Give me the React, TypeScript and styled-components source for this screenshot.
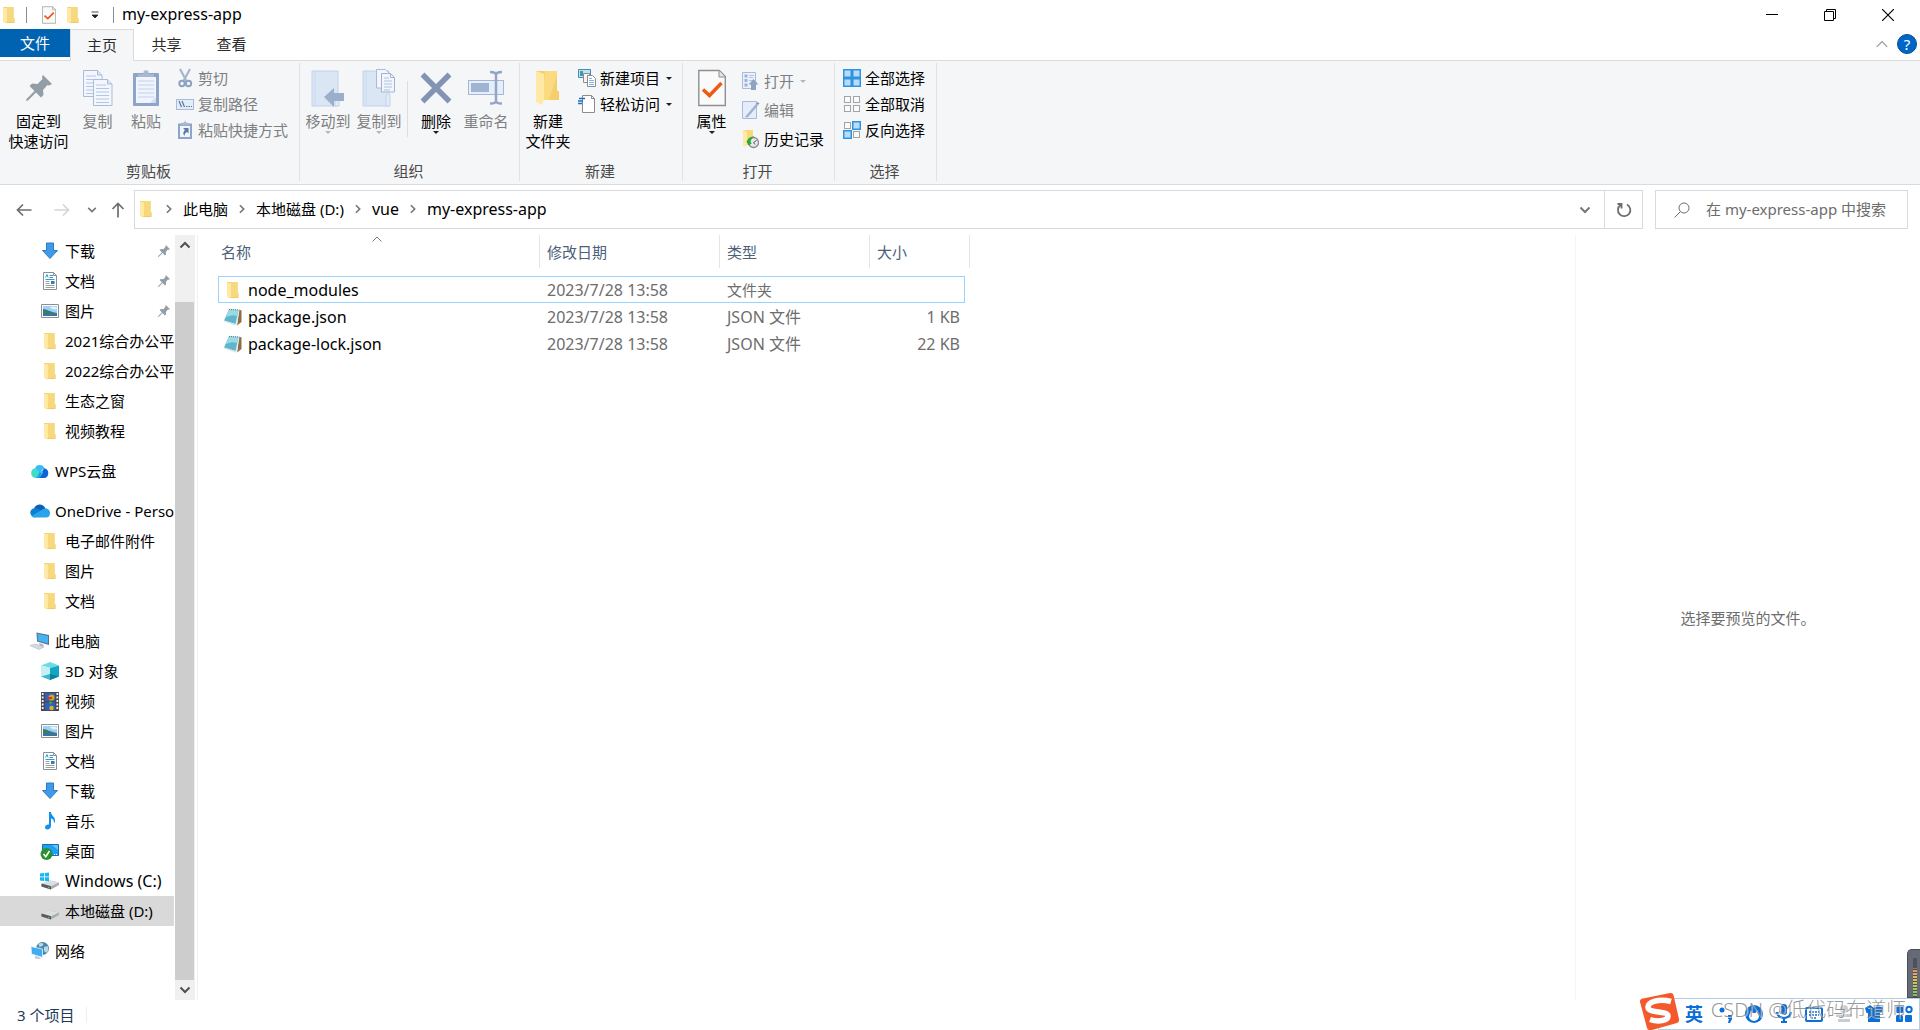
import React, { useState } from "react";
import styled, { createGlobalStyle, css } from "styled-components";

const GlobalStyle = createGlobalStyle`
  *, *::before, *::after { box-sizing: border-box; }
  body {
    margin: 0;
    background: #fff;
    color: #000;
    font: 15px/20px "Noto Sans", "Noto Sans CJK SC", sans-serif;
  }
  button, input { font: inherit; color: inherit; }
  button { border: 0; padding: 0; background: none; cursor: default; }
  a { color: inherit; text-decoration: none; }
  svg { display: block; flex: none; }
`;

/* ---------- icons ---------- */

const FolderIcon = ({ size = 18 }: { size?: number }) => (
  <svg width={size} height={size} viewBox="0 0 18 18">
    <path d="M3 1h10.500v11.500h1V17H5z" fill="#f0cb6b" />
    <path d="M6 1h7.500v11l1 .5v3.500H6z" fill="#f7d87c" />
    <path d="M3 1.200l4 1.300v12.500l-1 2.500-3-1.500z" fill="#ffeaa5" />
  </svg>
);

const NewFolderIcon = () => (
  <svg width="26" height="36" viewBox="0 0 26 36">
    <path d="M1 1h21v20l2 2v7H8z" fill="#f5cf6a" />
    <path d="M10 1h12v19l2 2v8H8z" fill="#fbdb80" />
    <path d="M14 30L22 5v15l2 2v8z" fill="#f2ca62" opacity=".7" />
    <path d="M1 1l8 3v26l-2 5-6-3z" fill="#ffe9a6" />
  </svg>
);

const PinIcon = ({ size = 14 }: { size?: number }) => (
  <svg width={size} height={size} viewBox="0 0 26 26">
    <path
      d="M17 0l9 9-3 1.500-1.500-.5-4.500 5 .5 5-2.500 2.500-5-5L2 25.500l-2 .5.5-2L8.500 16 3.500 11 6 8.500l5.500.5L16.500 4 16 2z"
      fill="#929da5"
    />
  </svg>
);

const Sheet = ({ x, y }: { x: number; y: number }) => (
  <g transform={`translate(${x} ${y})`}>
    <path d="M.5.500h14l4.500 4.500v21.500H.5z" fill="#f3f7fd" stroke="#a9bbd8" />
    <path d="M14.500.5V5H19" fill="#dce6f5" stroke="#a9bbd8" />
    <path d="M3 6h10M3 9.500h13M3 13h13M3 16.500h13M3 20h13M3 23.500h13" stroke="#b4c6e4" />
  </g>
);

const CopyIcon = () => (
  <svg width="32" height="38" viewBox="0 0 32 38">
    <Sheet x={1} y={1} />
    <Sheet x={11} y={10} />
  </svg>
);

const PasteIcon = () => (
  <svg width="28" height="38" viewBox="0 0 28 38">
    <rect x="1" y="4" width="26" height="33" rx="1" fill="#8fa4c9" />
    <rect x="4" y="8" width="20" height="26" fill="#f0f5fd" />
    <path d="M6 12h16M6 16h16M6 20h16M6 24h16M6 28h16" stroke="#c2d1ea" />
    <path d="M6 8V5h5l1-3.500h4L17 5h5v3z" fill="#a8b7d2" />
    <path d="M18 34l6-6v6z" fill="#d4dfef" />
  </svg>
);

const CutIcon = () => (
  <svg width="18" height="20" viewBox="0 0 18 20" fill="none">
    <path d="M4 1l6.500 12M14 1L7.500 13" stroke="#a9b5cb" strokeWidth="2.200" />
    <circle cx="6" cy="15.500" r="2.700" stroke="#8fa1c2" strokeWidth="2" />
    <circle cx="12.500" cy="15.500" r="2.700" stroke="#8fa1c2" strokeWidth="2" />
  </svg>
);

const PathIcon = () => (
  <svg width="18" height="18" viewBox="0 0 18 18">
    <rect x=".5" y="4.500" width="17" height="10" fill="#e3ecf9" stroke="#a9bbd8" />
    <path d="M3 6l2.500 6M6 6l2.500 6" stroke="#5f7294" strokeWidth="1.200" />
    <path d="M10 11.500h1.500M12.500 11.500H14M15 11.500h1" stroke="#5f7294" />
  </svg>
);

const ShortcutIcon = () => (
  <svg width="18" height="20" viewBox="0 0 18 20">
    <path d="M2 3.500h14V19H2z" fill="#8fa4c9" />
    <path d="M4 6h10v11H4z" fill="#eff5fd" />
    <path d="M5 5.500V3l3-.5 1-2 1 2 3 .5v2.500z" fill="#a8b7d2" />
    <path d="M7 8h5.500v5.500L11 12c-2 1-2.500 2-2.500 4-2-2.500-1-4.500.5-6z" fill="#5f789f" />
  </svg>
);

const DisabledBook = () => (
  <>
    <path d="M1 2h26v35H1z" fill="#dbe6f5" stroke="#c3d2e9" />
    <path d="M4 2v34" stroke="#c9d7ec" />
    <path d="M24 37V27q3-4 4-1v11z" fill="#e3ebf7" stroke="#c3d2e9" />
  </>
);

const MoveToIcon = () => (
  <svg width="34" height="38" viewBox="0 0 34 38">
    <DisabledBook />
    <path d="M13 28l10-9v5h10v8H23v6z" fill="#9baecb" />
  </svg>
);

const CopyToIcon = () => (
  <svg width="34" height="38" viewBox="0 0 34 38">
    <DisabledBook />
    <g transform="translate(14 0)">
      <path d="M.5.500h9l4 4V19H.5z" fill="#f3f7fd" stroke="#a9bbd8" />
      <path d="M5.500 4.500h9l4 4V23h-13z" fill="#f3f7fd" stroke="#9fb3d4" />
      <path d="M14.500 4.500v4h4" fill="none" stroke="#9fb3d4" />
      <path d="M8 9h5M8 12h8M8 15h8M8 18h8M8 21h6" stroke="#aec0de" />
    </g>
  </svg>
);

const DeleteIcon = () => (
  <svg width="34" height="38" viewBox="0 0 34 38">
    <path d="M3.500 5.500l27 27M30.500 5.500l-27 27" stroke="#8393b4" strokeWidth="5.500" />
  </svg>
);

const RenameIcon = () => (
  <svg width="38" height="38" viewBox="0 0 38 38">
    <rect x="1.500" y="11.500" width="35" height="14" fill="#e6eefa" stroke="#a3b7d9" />
    <rect x="4" y="14" width="18" height="9" fill="#a0b3d2" />
    <path d="M23 3c4 0 6 .5 6 3v26c0 2-2 2.500-6 2.500M35 3c-4 0-6 .5-6 3v26c0 2 2 2.500 6 2.500" fill="none" stroke="#93a5c4" strokeWidth="2.500" />
  </svg>
);

const NewItemIcon = () => (
  <svg width="18" height="18" viewBox="0 0 18 18">
    <path d="M.5.500h12v8H.5z" fill="#bfe3f7" stroke="#3f8fae" />
    <path d="M2 2h3v5H2z" fill="#4a95a5" />
    <path d="M5.500 4.500h6v9h-6z" fill="#f5f5f5" stroke="#8d8d8d" />
    <path d="M9.500 6.500h5l3 3v8h-8z" fill="#fff" stroke="#8d8d8d" />
    <path d="M11 9.500h3M11 11.500h5M11 13.500h5M11 15.500h5" stroke="#7cb5e8" />
  </svg>
);

const EasyAccessIcon = () => (
  <svg width="18" height="18" viewBox="0 0 18 18">
    <path d="M4.500.500h9l3 3v14h-12z" fill="#fff" stroke="#8d8d8d" />
    <path d="M13.500.5v3h3" fill="none" stroke="#8d8d8d" />
    <path d="M1 3.500h6M0 6h5M0 8.500h4" stroke="#1d6fc0" strokeWidth="1.300" />
  </svg>
);

const PropertiesIcon = ({ width = 28, height = 38 }: { width?: number; height?: number }) => (
  <svg width={width} height={height} viewBox="0 0 28 38" preserveAspectRatio="none">
    <path d="M.8 1.500h20.500l6 6V36.500H.8z" fill="#fafafa" stroke="#8f8f8f" strokeWidth="1.400" />
    <path d="M21 1.500v6.500h6" fill="#e4e4e4" stroke="#8f8f8f" />
    <path d="M5 20.500l6.500 6L23.500 14" fill="none" stroke="#ee5a16" strokeWidth="3.400" />
  </svg>
);

const OpenIcon = () => (
  <svg width="18" height="20" viewBox="0 0 18 20">
    <path d="M.5 1.500h13v16H.5z" fill="#eaf1fb" stroke="#a9bbd8" />
    <path d="M2.500 3.500h3v3h-3zM2.500 8h3v3h-3zM2.500 12.500h3v3h-3z" fill="#9db1d2" />
    <path d="M7 4.500h5M7 6.500h4M7 9.500h4" stroke="#b5c6e2" />
    <path d="M11.500 8l5 5.500H14V19H9v-5.500H6.500z" fill="#8fa2c2" />
  </svg>
);

const EditIcon = () => (
  <svg width="18" height="20" viewBox="0 0 18 20">
    <path d="M.5 1.500h14v17H.5z" fill="#e4edf9" stroke="#a9bbd8" />
    <path d="M3 17L14 4l2 1.500L5.500 17.500z" fill="#9fb1cf" />
    <path d="M14 3.500l1.500-1.500 2 1.500L16 5z" fill="#8398bb" />
  </svg>
);

const HistoryIcon = () => (
  <svg width="18" height="20" viewBox="0 0 18 20">
    <path d="M1 1h10v15H2z" fill="#f7d87c" />
    <path d="M1 1l4 2v11l-1 4-3-1.500z" fill="#ffeaa5" />
    <circle cx="11.500" cy="13.500" r="5" fill="#e9e9e9" stroke="#8b8b8b" strokeWidth="1.300" />
    <path d="M11.500 13.500l3-2M11.500 13.500l1.500 2" stroke="#555" />
    <path d="M4 12l3 4.500 3-2.500-1.500-.5c0-3 2-5 4-6-5 0-7 2.500-7.500 5z" fill="#23a83a" />
  </svg>
);

const SelectIcon = ({ on }: { on: boolean[] }) => (
  <svg width="18" height="18" viewBox="0 0 18 18">
    {on.map((lit, i) => (
      <rect
        key={i}
        x={(i % 2) * 9 + (lit ? 0.75 : 1.5)}
        y={Math.floor(i / 2) * 9 + (lit ? 0.75 : 1.5)}
        width={lit ? 7.5 : 6}
        height={lit ? 7.5 : 6}
        fill={lit ? "#b7dcfb" : "#fafafa"}
        stroke={lit ? "#2f94e0" : "#a3a3a3"}
        strokeWidth={lit ? 1.5 : 1}
      />
    ))}
  </svg>
);

const DownloadIcon = () => (
  <svg width="18" height="18" viewBox="0 0 18 18">
    <path d="M5.500 1h7v7.500h4L9 16.500 1.500 8.500h4z" fill="#3f9be8" stroke="#2a7cc4" />
  </svg>
);

const DocumentIcon = () => (
  <svg width="18" height="18" viewBox="0 0 18 18">
    <path d="M2.500.500h10l3 3v14h-13z" fill="#fff" stroke="#8a8f94" />
    <path d="M12.500.5v3h3" fill="none" stroke="#8a8f94" />
    <path d="M4.500 5.500l1.500-3 1 3M8.500 3.500H12M8.500 5.500H12M4.500 7.500h9" stroke="#2f9bd6" fill="none" />
    <path d="M4.500 9.500h4M4.500 11.500h4M4.500 13.500h9M4.500 15.500h9" stroke="#9a9fa4" />
    <path d="M10 9h3.500v3H10z" fill="#2f7fb5" />
  </svg>
);

const PictureIcon = () => (
  <svg width="18" height="18" viewBox="0 0 18 18">
    <path d="M.5 2.500h17v13H.5z" fill="#fff" stroke="#8a8f94" />
    <path d="M2 4h14v10H2z" fill="#9fd0f5" />
    <path d="M2 7c4 0 7 3 14 4v3H2z" fill="#3b7d6a" />
    <path d="M2 12c5-1 9 0 14-1v3H2z" fill="#3a73a8" />
    <path d="M9 5.500c2-1.500 5-1 7 0v1.500c-3 1-5 0-7-1.500z" fill="#e6f4fd" />
  </svg>
);

const WpsIcon = () => (
  <svg width="20" height="18" viewBox="0 0 20 18">
    <path d="M14 6.200a5 5 0 01.5 9.800H7l6-8z" fill="#1160dc" />
    <path d="M5.300 6.300A4.900 4.900 0 005.500 16H8c2.500-.5 3.500-3 5-6-2-3-5-4.300-7.700-3.700z" fill="#3fdcc9" />
    <path d="M5 6.400a5 5 0 019.500 0c-2.500.6-3.500 2.600-4.800 4.600C8.800 8.500 7.500 6.800 5 6.400z" fill="#35bdfb" />
    <path d="M8 16c2-1 3-3 4-5l-2.500-1c-.5 2-1.500 4-3.500 6z" fill="#1f9cf0" />
  </svg>
);

const OneDriveIcon = () => (
  <svg width="20" height="18" viewBox="0 0 20 18">
    <path d="M4 6.500C6 1.500 13 1 15.500 6.500L10 11z" fill="#0b62b5" />
    <path d="M4.500 6.300c2-.3 4 .7 8 3.200L5 15.500C-1.500 14-1 7 4.500 6.300z" fill="#0f7fd6" />
    <path d="M11 8.500c5-4 9-1.500 9 2.500 0 3-1.500 4.500-4 4.500H4.500c-1.500 0-2.500-.7-3-1.500z" fill="#28a5ea" />
  </svg>
);

const ComputerIcon = () => (
  <svg width="20" height="18" viewBox="0 0 20 18">
    <path d="M6.500.5L19 3v10L7 9.500z" fill="#5a7287" />
    <path d="M7.500 1.700L18 4v7.500L8 8.800z" fill="#46b2f3" />
    <path d="M9 11l4 1.500 1 2-4-.5z" fill="#a8b0b8" />
    <path d="M0 13.500L6 12l8 3-5 2.500z" fill="#d5dade" stroke="#b4bbc2" strokeWidth=".6" />
  </svg>
);

const CubeIcon = () => (
  <svg width="18" height="18" viewBox="0 0 18 18">
    <path d="M0 3.500L9 0l9 3.500L9 6z" fill="#6bdbe6" />
    <path d="M0 3.500L9 6v12l-9-3.500z" fill="#c4f0f3" />
    <path d="M18 3.500L9 6v12l9-3.500z" fill="#12a5c4" />
    <path d="M9 12l9 2.500L9 18z" fill="#08839b" />
    <path d="M9 12l-9 2.500L9 18z" fill="#3fb9c9" />
  </svg>
);

const VideoIcon = () => (
  <svg width="18" height="19" viewBox="0 0 18 19">
    <path d="M0 0h18v19H0z" fill="#4a4a4a" />
    <path d="M4 1h10v8H4zM4 10.500h10V18H4z" fill="#2a62c4" />
    <circle cx="10.500" cy="5.500" r="3" fill="#d7a326" />
    <path d="M6 5h5v2H6z" fill="#c23a34" />
    <path d="M8 9l4 1-3 3z" fill="#48a23b" />
    <circle cx="10.500" cy="16" r="2.200" fill="#e1b02b" />
    <path d="M1.700 1v17M16.300 1v17" stroke="#f2f2f2" strokeWidth="1.800" strokeDasharray="2 1.500" />
  </svg>
);

const MusicIcon = () => (
  <svg width="18" height="18" viewBox="0 0 18 18">
    <path d="M8 0h2c0 4 4.500 4.500 4 9-.2 1.500-1 2.500-1 2.500 0-3-.5-4.500-3-5V14c0 4-6 4.500-6 1.500C4 13 6.500 12 8 12.500z" fill="#1291ea" />
  </svg>
);

const DesktopIcon = () => (
  <svg width="20" height="18" viewBox="0 0 20 18">
    <path d="M2.500 2.500h16v11h-16z" fill="#1ea1f2" stroke="#146eaf" />
    <path d="M12 3h6v5z" fill="#62c4fb" />
    <path d="M14 12.500h4" stroke="#fff" strokeDasharray="1 1" />
    <circle cx="6.500" cy="12" r="6" fill="#29912f" />
    <path d="M3.500 12l2.300 2.700L9.500 9" stroke="#fff" strokeWidth="1.600" fill="none" />
  </svg>
);

const DriveIcon = ({ windows = false }: { windows?: boolean }) => (
  <svg width="20" height="18" viewBox="0 0 20 18">
    <path d="M1.500 12L10 8.500l9 2V13l-8 4.500-9.500-3z" fill="#aaadaf" />
    <path d="M1.500 11.500L10 8.500l9 2-8 3.800z" fill="#dcdee0" />
    <path d="M1.500 11.500l9.500 2.800v3.200l-9.500-3z" fill="#585b5e" />
    <path d="M8 15l1.500.5v.8L8 15.800z" fill="#5dea6b" />
    {windows && <path d="M0 1.500L4 1v3.500H0zM4.800.900L9 .5v4H4.800zM0 5.300h4V9l-4-.5zM4.800 5.300H9v4L4.800 9z" fill="#15b7f5" />}
  </svg>
);

const NetworkIcon = () => (
  <svg width="20" height="18" viewBox="0 0 20 18">
    <circle cx="12.500" cy="6.500" r="6.500" fill="#4d86a8" />
    <path d="M8.500 2q3-2 5 0l-1 2-3 1zM14 5l3.500-1q2 4-1 7l-2.500-2z" fill="#b5dbe6" />
    <path d="M1 4.500L12.500 7v8.500L1.500 12z" fill="#3fadf2" stroke="#e9f5fc" strokeWidth=".8" />
    <path d="M5 14l4 1 2 2-6-.5z" fill="#bfc7cc" />
  </svg>
);

const JsonIcon = () => (
  <svg width="20" height="18" viewBox="0 0 20 18">
    <path d="M16 1.500l2.500 1V14L14 17.500z" fill="#8b6f4a" />
    <path d="M7 .5l9.500 1L14 17.500l-1.500-.5z" fill="#e5eef0" />
    <path d="M6 1.500l9.500.5-3 14L1 12.500z" fill="#5fb6cb" />
    <path d="M6 1.500l9.500.5-1.500 6C9 6 6 8 3 9z" fill="#9ad9e6" />
    <path d="M1 12.500L12.500 16v1.500L1 13.500z" fill="#d9e3e6" />
    <path d="M6 1.500L15.500 2" stroke="#5d7b84" strokeDasharray="1 1" />
  </svg>
);

type ChevronProps = { dir: "up" | "down" | "right"; size?: number; color?: string; weight?: number };
const turns = { up: 180, down: 0, right: 270 };
const Chevron = ({ dir, size = 12, color = "#777", weight = 1.5 }: ChevronProps) => (
  <svg width={size} height={size} viewBox="0 0 12 12">
    <path d="M1.500 3.500L6 8l4.500-4.500" transform={`rotate(${turns[dir]} 6 6)`} fill="none" stroke={color} strokeWidth={weight} />
  </svg>
);

const Arrow = ({ turn = 0, color = "#6d6d6d" }: { turn?: number; color?: string }) => (
  <svg width="16" height="16" viewBox="0 0 16 16">
    <path d="M15.500 8H1.500M7 2.500L1.500 8 7 13.500" transform={`rotate(${turn} 8 8)`} fill="none" stroke={color} strokeWidth="1.700" />
  </svg>
);

const Caret = styled.span<{ $dim?: boolean }>`
  width: 0;
  height: 0;
  border: 3px solid transparent;
  border-top-color: ${(p) => (p.$dim ? "#b5b8bb" : "#1e1e1e")};
  border-bottom: 0;
`;

/* ---------- window frame ---------- */

const Window = styled.div`
  height: 100vh;
  display: flex;
  flex-direction: column;
  overflow: hidden;
  position: relative;
`;

const TitleBar = styled.header`
  height: 29px;
  display: flex;
  align-items: center;
  padding-right: 3px;
  flex: none;
`;

const QuickAccess = styled.div`
  display: flex;
  align-items: center;
  gap: 8px;
  flex: 1;
`;

const QuickTools = styled.div`
  display: flex;
  padding-left: 2px;
`;

const QuickButton = styled.button<{ $narrow?: boolean }>`
  display: grid;
  place-items: center;
  width: ${(p) => (p.$narrow ? 20 : 24)}px;
`;

const Rule = styled.span`
  width: 1px;
  height: 16px;
  background: #8c8c8c;
`;

const Title = styled.h1`
  font-size: 16px;
  font-weight: 400;
  margin: 0;
  padding-bottom: 2px;
`;

const CaptionButton = styled.button`
  width: 58px;
  height: 29px;
  display: grid;
  place-items: center;
`;

const TabBar = styled.nav`
  height: 32px;
  display: flex;
  border-bottom: 1px solid #dadbdc;
  flex: none;
`;

const Tab = styled.button<{ $kind?: "file" | "active" }>`
  width: 65px;
  height: 31px;
  padding-bottom: 2px;
  color: #2b2b2b;
  ${(p) => p.$kind === "file" && css`
    width: 70px;
    height: 28px;
    padding-bottom: 0;
    color: #fff;
    background: #0063b1;
  `}
  ${(p) => p.$kind === "active" && css`
    width: 64px;
    height: 32px;
    background: #f5f6f7;
    border: 1px solid #dadbdc;
    border-bottom: 0;
  `}
`;

const TabTools = styled.div`
  margin-left: auto;
  display: flex;
  align-items: center;
  gap: 8px;
  padding: 0 3px 2px 0;
`;

const HelpButton = styled.button`
  width: 20px;
  height: 20px;
  border-radius: 50%;
  border: 1px solid #0b4f8a;
  background: #0067c8;
  color: #fff;
  font-size: 15px;
  line-height: 18px;
`;

/* ---------- ribbon ---------- */

const Ribbon = styled.div`
  height: 124px;
  background: #f5f6f7;
  border-bottom: 1px solid #dadbdc;
  display: flex;
  padding: 2px 0 3px;
  flex: none;
`;

const Group = styled.section<{ $width: number }>`
  width: ${(p) => p.$width}px;
  display: flex;
  flex-direction: column;
  border-right: 1px solid #e0e2e4;
`;

const GroupBody = styled.div`
  flex: 1;
  display: flex;
  align-items: flex-start;
`;

const GroupLabel = styled.h2`
  margin: 0;
  padding-right: 2px;
  font-size: 15px;
  font-weight: 400;
  line-height: 20px;
  text-align: center;
  color: #4a4a4a;
`;

const BigButton = styled.button<{ $width?: number }>`
  width: ${(p) => p.$width ?? 50}px;
  display: flex;
  flex-direction: column;
  align-items: center;
  padding-top: 5px;
  white-space: nowrap;
  &:disabled { color: #7d7f82; }
`;

const BigIcon = styled.span`
  height: 43px;
  display: grid;
  justify-items: center;
  align-content: center;
  padding-bottom: 4px;
`;

const Divider = styled.span`
  width: 1px;
  height: 56px;
  margin: 18px 3px 0 5px;
  background: #dcdee0;
`;

const SmallList = styled.div<{ $gap: number; $top?: number; $left?: number }>`
  display: flex;
  flex-direction: column;
  padding: ${(p) => p.$top ?? 5}px 0 0 ${(p) => p.$left ?? 2}px;
  gap: ${(p) => p.$gap}px;
`;

const SmallButton = styled.button`
  height: 20px;
  display: flex;
  align-items: center;
  gap: 4px;
  white-space: nowrap;
  &:disabled { color: #7d7f82; }
  ${Caret} { margin-left: 2px; }
`;

type BigProps = { icon: React.ReactNode; lines: string[]; width?: number; disabled?: boolean; caret?: boolean };
const Big = ({ icon, lines, width, disabled, caret }: BigProps) => (
  <BigButton $width={width} disabled={disabled}>
    <BigIcon>{icon}</BigIcon>
    {lines.map((l) => <span key={l}>{l}</span>)}
    {caret && <Caret $dim={disabled} />}
  </BigButton>
);

type SmallProps = { icon: React.ReactNode; label: string; disabled?: boolean; caret?: boolean };
const Small = ({ icon, label, disabled, caret }: SmallProps) => (
  <SmallButton disabled={disabled}>
    {icon}
    {label}
    {caret && <Caret $dim={disabled} />}
  </SmallButton>
);

/* ---------- address row ---------- */

const AddressRow = styled.div`
  display: flex;
  align-items: center;
  padding: 5px 12px 6px 5px;
  flex: none;
`;

const NavButton = styled.button<{ $width: number }>`
  width: ${(p) => p.$width}px;
  height: 20px;
  display: grid;
  place-items: center;
`;

const AddressBox = styled.div`
  flex: 1;
  height: 39px;
  margin-left: 1px;
  border: 1px solid #d9d9d9;
  display: flex;
  align-items: center;
`;

const Crumbs = styled.ol`
  list-style: none;
  display: flex;
  align-items: center;
  flex: 1;
  margin: 0;
  padding: 0 0 2px 2px;
`;

const Crumb = styled.li<{ $latin: boolean }>`
  display: flex;
  align-items: center;
  gap: 9px;
  margin-left: 9px;
  font-size: ${(p) => (p.$latin ? 16 : 15)}px;
`;

const BoxButton = styled.button<{ $line?: boolean }>`
  width: 38px;
  height: 100%;
  display: grid;
  place-items: center;
  border-left: ${(p) => (p.$line ? "1px solid #d9d9d9" : "0")};
`;

const SearchBox = styled.label`
  width: 253px;
  height: 39px;
  margin-left: 12px;
  border: 1px solid #d9d9d9;
  display: flex;
  align-items: center;
  gap: 16px;
  padding-left: 18px;
`;

const SearchInput = styled.input`
  flex: 1;
  min-width: 0;
  border: 0;
  padding: 0 0 2px;
  outline: 0;
  background: none;
  &::placeholder { color: #6d6d6d; opacity: 1; }
`;

/* ---------- main area ---------- */

const Main = styled.div`
  flex: 1;
  display: flex;
  min-height: 0;
`;

const Tree = styled.nav`
  width: 175px;
  overflow: hidden;
  display: flex;
  flex-direction: column;
  gap: 10px;
  padding: 1px 1px 0 0;
  flex: none;
`;

const TreeList = styled.ul`
  list-style: none;
  margin: 0;
  padding: 0;
`;

const TreeLink = styled.a<{ $top?: boolean; $selected?: boolean; $latin?: boolean }>`
  height: 30px;
  display: flex;
  align-items: center;
  gap: 5px;
  padding-left: ${(p) => (p.$top ? 30 : 40)}px;
  font-size: ${(p) => (p.$latin ? 16 : 15)}px;
  white-space: nowrap;
  background: ${(p) => (p.$selected ? "#d9d9d9" : "none")};
`;

const TreeIcon = styled.span`
  width: 20px;
  display: grid;
  justify-items: center;
  flex: none;
`;

const PinSlot = styled.span`
  margin-left: auto;
  padding-right: 4px;
`;

const ScrollBar = styled.div`
  width: 20px;
  background: #f0f0f0;
  display: flex;
  flex-direction: column;
  flex: none;
`;

const ScrollButton = styled.button`
  height: 20px;
  display: grid;
  place-items: center;
`;

const ScrollThumb = styled.div`
  flex: 1;
  margin: 47px 1px 0 0;
  background: #cdcdcd;
`;

const Files = styled.main`
  flex: 1;
  min-width: 0;
  margin-left: 2px;
  padding-left: 20px;
  border-left: 1px solid #f0f0f0;
`;

const FileTable = styled.table`
  width: 752px;
  table-layout: fixed;
  border-collapse: separate;
  border-spacing: 0;
`;

const HeadCell = styled.th`
  padding: 0 0 8px;
  font-weight: 400;
  text-align: left;
  color: #4c607a;
`;

const HeadLabel = styled.div`
  height: 33px;
  display: flex;
  align-items: center;
  padding-left: 7px;
  border-right: 1px solid #e5e5e5;
  position: relative;
  ${HeadCell}:first-child & { padding-left: 3px; }
`;

const SortMark = styled.span`
  position: absolute;
  top: -2px;
  left: 0;
  right: 4px;
  display: grid;
  justify-items: center;
`;

const Cell = styled.td<{ $right?: boolean; $latin?: boolean }>`
  height: 27px;
  padding: 0 ${(p) => (p.$right ? 4 : 0)}px 0 7px;
  border: 1px solid transparent;
  border-width: 1px 0;
  font-size: ${(p) => (p.$latin ? 16 : 15)}px;
  color: #6d6d6d;
  text-align: ${(p) => (p.$right ? "right" : "left")};
  white-space: nowrap;
  &:first-child { padding-left: 4px; border-left-width: 1px; }
  &:last-child { border-right-width: 1px; }
`;

const FileRow = styled.tr<{ $focus?: boolean }>`
  ${(p) => p.$focus && css`
    ${Cell} { border-color: #99d1ff; }
  `}
`;

const FileName = styled.a`
  display: flex;
  align-items: center;
  gap: 5px;
  color: #000;
`;

const Preview = styled.aside`
  width: 345px;
  border-left: 1px solid #f6f6f6;
  display: grid;
  place-items: center;
  color: #6d6d6d;
  flex: none;
`;

const StatusBar = styled.footer`
  height: 30px;
  display: flex;
  align-items: center;
  padding-left: 17px;
  color: #1e395b;
  flex: none;
`;

const StatusItem = styled.span`
  padding-right: 12px;
  border-right: 1px solid #eee;
  line-height: 16px;
`;

/* ---------- floating widgets ---------- */

const ImeBar = styled.div`
  position: absolute;
  right: 0;
  bottom: 0;
  height: 32px;
  width: 262px;
  border: 1px solid #b6cbe4;
  background: #fff;
  display: flex;
  align-items: center;
  gap: 12px;
  padding-left: 26px;
  color: #0b6fd8;
`;

const ImeLogo = styled.div`
  position: absolute;
  left: -20px;
  bottom: -3px;
`;

const ImeMode = styled.button`
  font-size: 18px;
  font-weight: 700;
`;

const ImeButton = styled.button`
  width: 18px;
  height: 20px;
`;

const Watermark = styled.div`
  position: absolute;
  right: 14px;
  bottom: 7px;
  font-size: 20px;
  line-height: 26px;
  font-weight: 300;
  color: rgba(125, 125, 125, 0.8);
  text-shadow: 1px 1px 0 rgba(255, 255, 255, 0.6);
  white-space: nowrap;
`;

const Meter = styled.div`
  position: absolute;
  right: 0;
  bottom: 32px;
  width: 13px;
  height: 49px;
  padding: 8px 3px 0 5px;
  border: 1px solid #4a4e59;
  border-right: 0;
  border-radius: 5px 0 0 0;
  background: #666a77;
`;

const MeterScale = styled.div`
  height: 100%;
  background:
    repeating-linear-gradient(transparent 0 2px, #4a4e59 2px 3px),
    linear-gradient(#50535e 0 10px, #e98a5c 11px, #e3bf4d 20px, #b9c952 29px, #6fc05f 40px);
`;

/* ---------- data ---------- */

type Node = { label: string; icon: React.ReactNode; top?: boolean; pin?: boolean; latin?: boolean };
const folder = <FolderIcon />;

const tree: Node[][] = [
  [
    { label: "下载", icon: <DownloadIcon />, pin: true },
    { label: "文档", icon: <DocumentIcon />, pin: true },
    { label: "图片", icon: <PictureIcon />, pin: true },
    { label: "2021综合办公平", icon: folder },
    { label: "2022综合办公平", icon: folder },
    { label: "生态之窗", icon: folder },
    { label: "视频教程", icon: folder },
  ],
  [{ label: "WPS云盘", icon: <WpsIcon />, top: true }],
  [
    { label: "OneDrive - Perso", icon: <OneDriveIcon />, top: true },
    { label: "电子邮件附件", icon: folder },
    { label: "图片", icon: folder },
    { label: "文档", icon: folder },
  ],
  [
    { label: "此电脑", icon: <ComputerIcon />, top: true },
    { label: "3D 对象", icon: <CubeIcon /> },
    { label: "视频", icon: <VideoIcon /> },
    { label: "图片", icon: <PictureIcon /> },
    { label: "文档", icon: <DocumentIcon /> },
    { label: "下载", icon: <DownloadIcon /> },
    { label: "音乐", icon: <MusicIcon /> },
    { label: "桌面", icon: <DesktopIcon /> },
    { label: "Windows (C:)", icon: <DriveIcon windows />, latin: true },
    { label: "本地磁盘 (D:)", icon: <DriveIcon /> },
  ],
  [{ label: "网络", icon: <NetworkIcon />, top: true }],
];

const files = [
  { name: "node_modules", icon: folder, date: "2023/7/28 13:58", type: "文件夹", size: "" },
  { name: "package.json", icon: <JsonIcon />, date: "2023/7/28 13:58", type: "JSON 文件", size: "1 KB" },
  { name: "package-lock.json", icon: <JsonIcon />, date: "2023/7/28 13:58", type: "JSON 文件", size: "22 KB" },
];

const crumbs = ["此电脑", "本地磁盘 (D:)", "vue", "my-express-app"];
const startsLatin = (s: string) => /^[\x20-\x7e]/.test(s);

const imeIcons: [string, React.ReactNode][] = [
  ["标点", <><circle cx="7" cy="6" r="2.500" /><path d="M13 11h4v4l-2 4h-2l1-4h-1z" /></>],
  ["表情", <><circle cx="9" cy="10" r="9" /><path d="M4 12a5 5 0 0010 0L12 6l-1.500 3h-3L6 6z" fill="#fff" /></>],
  ["语音", <><rect x="6" y="0" width="6" height="11" rx="3" /><path d="M2 8a7 6 0 0014 0M9 14v3M6 18h6" fill="none" stroke="currentColor" strokeWidth="2.200" /></>],
  ["键盘", <><rect x="1" y="4" width="16" height="13" rx="1" fill="none" stroke="currentColor" strokeWidth="2" /><path d="M4 8h10M4 11h10M6 14h6" stroke="currentColor" strokeWidth="1.500" strokeDasharray="2 1" /></>],
  ["登录", <g fill="#c9cdd2"><circle cx="9" cy="5" r="4" /><path d="M1 10h16v3H1zM3 15h12v3H3z" /></g>],
  ["皮肤", <path d="M5 1l4 3 4-3 5 3-1.500 5H15v9H3V9H1.500L0 4z" />],
  ["工具箱", <><rect x="1" y="2" width="7" height="7" rx="1" /><circle cx="14" cy="5.500" r="2.700" fill="none" stroke="currentColor" strokeWidth="2" /><rect x="1" y="11" width="7" height="7" rx="1" /><rect x="10" y="11" width="7" height="7" rx="1" /></>],
];

export default function App() {
  const [selected, setSelected] = useState("3-9");
  const [query, setQuery] = useState("");

  return (
    <>
      <GlobalStyle />
      <Window>
        <TitleBar>
          <QuickAccess>
            <FolderIcon />
            <Rule />
            <QuickTools>
              <QuickButton aria-label="属性"><PropertiesIcon width={14} height={18} /></QuickButton>
              <QuickButton aria-label="新建文件夹"><FolderIcon /></QuickButton>
              <QuickButton $narrow aria-label="自定义快速访问工具栏">
                <svg width="8" height="8" viewBox="0 0 8 8"><path d="M.5 1h7M1 4h6L4 7z" stroke="#222" fill="#222" strokeWidth=".8" /></svg>
              </QuickButton>
            </QuickTools>
            <Rule />
            <Title>my-express-app</Title>
          </QuickAccess>
          <CaptionButton aria-label="最小化">
            <svg width="12" height="12" viewBox="0 0 12 12"><path d="M0 5.500h12" stroke="#000" /></svg>
          </CaptionButton>
          <CaptionButton aria-label="还原">
            <svg width="12" height="12" viewBox="0 0 12 12"><path d="M.5 2.500h9v9h-9zM2.500 2.500v-2h9v9h-2" fill="none" stroke="#000" /></svg>
          </CaptionButton>
          <CaptionButton aria-label="关闭">
            <svg width="12" height="12" viewBox="0 0 12 12"><path d="M0 0l12 12M12 0L0 12" stroke="#000" strokeWidth="1.200" /></svg>
          </CaptionButton>
        </TitleBar>

        <TabBar>
          <Tab $kind="file">文件</Tab>
          <Tab $kind="active">主页</Tab>
          <Tab>共享</Tab>
          <Tab>查看</Tab>
          <TabTools>
            <button aria-label="最小化功能区"><Chevron dir="up" size={14} color="#999" weight={1} /></button>
            <HelpButton aria-label="帮助">?</HelpButton>
          </TabTools>
        </TabBar>

        <Ribbon>
          <Group $width={300}>
            <GroupBody>
              <Big width={77} icon={<PinIcon size={26} />} lines={["固定到", "快速访问"]} />
              <Big width={41} icon={<CopyIcon />} lines={["复制"]} disabled />
              <Big width={56} icon={<PasteIcon />} lines={["粘贴"]} disabled />
              <SmallList $gap={6}>
                <Small icon={<CutIcon />} label="剪切" disabled />
                <Small icon={<PathIcon />} label="复制路径" disabled />
                <Small icon={<ShortcutIcon />} label="粘贴快捷方式" disabled />
              </SmallList>
            </GroupBody>
            <GroupLabel>剪贴板</GroupLabel>
          </Group>
          <Group $width={220}>
            <GroupBody>
              <Big width={56} icon={<MoveToIcon />} lines={["移动到"]} disabled caret />
              <Big width={46} icon={<CopyToIcon />} lines={["复制到"]} disabled caret />
              <Divider />
              <Big width={50} icon={<DeleteIcon />} lines={["删除"]} caret />
              <Big width={50} icon={<RenameIcon />} lines={["重命名"]} disabled />
            </GroupBody>
            <GroupLabel>组织</GroupLabel>
          </Group>
          <Group $width={163}>
            <GroupBody>
              <Big width={56} icon={<NewFolderIcon />} lines={["新建", "文件夹"]} />
              <SmallList $gap={6}>
                <Small icon={<NewItemIcon />} label="新建项目" caret />
                <Small icon={<EasyAccessIcon />} label="轻松访问" caret />
              </SmallList>
            </GroupBody>
            <GroupLabel>新建</GroupLabel>
          </Group>
          <Group $width={152}>
            <GroupBody>
              <Big width={57} icon={<PropertiesIcon />} lines={["属性"]} caret />
              <SmallList $gap={9} $top={8}>
                <Small icon={<OpenIcon />} label="打开" disabled caret />
                <Small icon={<EditIcon />} label="编辑" disabled />
                <Small icon={<HistoryIcon />} label="历史记录" />
              </SmallList>
            </GroupBody>
            <GroupLabel>打开</GroupLabel>
          </Group>
          <Group $width={102}>
            <GroupBody>
              <SmallList $gap={6} $left={8}>
                <Small icon={<SelectIcon on={[true, true, true, true]} />} label="全部选择" />
                <Small icon={<SelectIcon on={[false, false, false, false]} />} label="全部取消" />
                <Small icon={<SelectIcon on={[false, true, true, false]} />} label="反向选择" />
              </SmallList>
            </GroupBody>
            <GroupLabel>选择</GroupLabel>
          </Group>
        </Ribbon>

        <AddressRow>
          <NavButton $width={38} aria-label="后退"><Arrow /></NavButton>
          <NavButton $width={38} aria-label="前进"><Arrow turn={180} color="#d5d5d5" /></NavButton>
          <NavButton $width={22} aria-label="最近浏览的位置"><Chevron dir="down" size={10} weight={2} /></NavButton>
          <NavButton $width={30} aria-label="上移"><Arrow turn={90} /></NavButton>
          <AddressBox>
            <Crumbs>
              <FolderIcon />
              {crumbs.map((c) => (
                <Crumb key={c} $latin={startsLatin(c)}>
                  <Chevron dir="right" size={10} weight={2} />
                  <a href="#">{c}</a>
                </Crumb>
              ))}
            </Crumbs>
            <BoxButton aria-label="以前的位置"><Chevron dir="down" weight={2} /></BoxButton>
            <BoxButton $line aria-label="刷新">
              <svg width="16" height="16" viewBox="0 0 16 16">
                <path d="M11 2.500a6.200 6.200 0 11-6.500.5M1.500 2h4v4.500" fill="none" stroke="#6d6d6d" strokeWidth="1.800" />
              </svg>
            </BoxButton>
          </AddressBox>
          <SearchBox>
            <svg width="16" height="16" viewBox="0 0 16 16">
              <path d="M6.500 9.500L.5 15.500" stroke="#6d6d6d" />
              <circle cx="10" cy="6" r="5" fill="none" stroke="#6d6d6d" />
            </svg>
            <SearchInput
              aria-label="搜索"
              placeholder="在 my-express-app 中搜索"
              value={query}
              onChange={(e) => setQuery(e.target.value)}
            />
          </SearchBox>
        </AddressRow>

        <Main>
          <Tree>
            {tree.map((group, g) => (
              <TreeList key={g}>
                {group.map((n, i) => (
                  <li key={i}>
                    <TreeLink
                      href="#"
                      $top={n.top}
                      $latin={n.latin}
                      $selected={selected === `${g}-${i}`}
                      onClick={() => setSelected(`${g}-${i}`)}
                    >
                      <TreeIcon>{n.icon}</TreeIcon>
                      {n.label}
                      {n.pin && <PinSlot><PinIcon size={12} /></PinSlot>}
                    </TreeLink>
                  </li>
                ))}
              </TreeList>
            ))}
          </Tree>
          <ScrollBar>
            <ScrollButton aria-label="向上滚动"><Chevron dir="up" color="#505050" weight={2} /></ScrollButton>
            <ScrollThumb />
            <ScrollButton aria-label="向下滚动"><Chevron dir="down" color="#505050" weight={2} /></ScrollButton>
          </ScrollBar>

          <Files>
            <FileTable>
              <colgroup>
                <col width="322" />
                <col width="180" />
                <col width="150" />
                <col width="95" />
                <col width="5" />
              </colgroup>
              <thead>
                <tr>
                  <HeadCell>
                    <HeadLabel>
                      名称
                      <SortMark><Chevron dir="up" color="#777" weight={1} /></SortMark>
                    </HeadLabel>
                  </HeadCell>
                  <HeadCell><HeadLabel>修改日期</HeadLabel></HeadCell>
                  <HeadCell><HeadLabel>类型</HeadLabel></HeadCell>
                  <HeadCell colSpan={2}><HeadLabel>大小</HeadLabel></HeadCell>
                </tr>
              </thead>
              <tbody>
                {files.map((f, i) => (
                  <FileRow key={f.name} $focus={i === 0}>
                    <Cell $latin>
                      <FileName href="#"><TreeIcon>{f.icon}</TreeIcon>{f.name}</FileName>
                    </Cell>
                    <Cell $latin>{f.date}</Cell>
                    <Cell $latin={startsLatin(f.type)}>{f.type}</Cell>
                    <Cell $right $latin>{f.size}</Cell>
                  </FileRow>
                ))}
              </tbody>
            </FileTable>
          </Files>

          <Preview>选择要预览的文件。</Preview>
        </Main>

        <StatusBar>
          <StatusItem>3 个项目</StatusItem>
        </StatusBar>

        <Meter><MeterScale /></Meter>
        <ImeBar>
          <ImeLogo>
            <svg width="42" height="40" viewBox="0 0 42 40">
              <path d="M4 6.500L31 1q3-.5 3.500 2L40 27q.5 3-2 4L13 38q-4 1-5-2L1 10q-.5-3 3-3.500z" fill="#f4592b" />
              <path d="M32 9.500C20 6 8.500 10 9 15.500c.5 6 20 3 20 8.500 0 4.500-9 6.500-18 3.500" fill="none" stroke="#fff" strokeWidth="5.500" />
            </svg>
          </ImeLogo>
          <ImeMode>英</ImeMode>
          {imeIcons.map(([name, art]) => (
            <ImeButton key={name} aria-label={name}>
              <svg width="18" height="20" viewBox="0 0 18 20" fill="currentColor">{art}</svg>
            </ImeButton>
          ))}
        </ImeBar>
        <Watermark>CSDN @低代码布道师</Watermark>
      </Window>
    </>
  );
}
